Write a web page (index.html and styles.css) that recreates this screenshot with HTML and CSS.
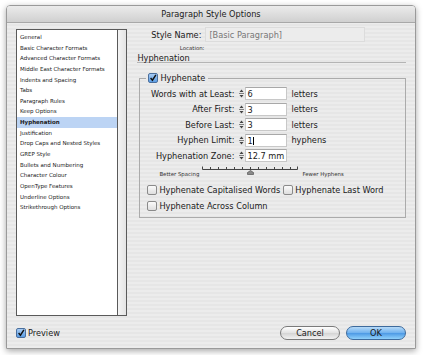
FILE: index.html
```html
<!DOCTYPE html>
<html>
<head>
<meta charset="utf-8">
<link rel="stylesheet" href="styles.css">
</head>
<body>
<div class="window">
  <div class="titlebar">Paragraph Style Options</div>
  <div class="body">
    <div class="main">
      <div class="sidebar">
        <ul class="list">
          <li>General</li>
          <li>Basic Character Formats</li>
          <li>Advanced Character Formats</li>
          <li>Middle East Character Formats</li>
          <li>Indents and Spacing</li>
          <li>Tabs</li>
          <li>Paragraph Rules</li>
          <li>Keep Options</li>
          <li class="sel">Hyphenation</li>
          <li>Justification</li>
          <li>Drop Caps and Nested Styles</li>
          <li>GREP Style</li>
          <li>Bullets and Numbering</li>
          <li>Character Colour</li>
          <li>OpenType Features</li>
          <li>Underline Options</li>
          <li>Strikethrough Options</li>
        </ul>
        <div class="scroll"></div>
      </div>
      <div class="panel">
        <div class="style-row">
          <span class="style-lbl">Style Name:</span>
          <span class="style-field">[Basic Paragraph]</span>
        </div>
        <div class="loc-row"><span class="loc-lbl">Location:</span></div>
        <div class="section-title">Hyphenation</div>
        <div class="group">
          <div class="legend">
            <span class="cb checked"><svg viewBox="0 0 10 10" width="10" height="10"><path d="M2 5 L4.3 7.8 L8.6 1.2" fill="none" stroke="#111" stroke-width="1.8"/></svg></span>
            <span>Hyphenate</span>
          </div>
          <div class="rows">
            <div class="row"><span class="rlbl">Words with at Least:</span><span class="spin"><svg viewBox="0 0 7 11" width="7" height="11"><path d="M3.5 1.5 L5.5 4 L1.5 4 Z M3.5 7 L5.5 7 L3.5 9.5 L1.5 7 Z" fill="#444"/><path d="M1 5.5 H6" stroke="#666" stroke-width="0.8"/></svg></span><span class="num">6</span><span class="unit">letters</span></div>
            <div class="row"><span class="rlbl">After First:</span><span class="spin"><svg viewBox="0 0 7 11" width="7" height="11"><path d="M3.5 1.5 L5.5 4 L1.5 4 Z M3.5 7 L5.5 7 L3.5 9.5 L1.5 7 Z" fill="#444"/><path d="M1 5.5 H6" stroke="#666" stroke-width="0.8"/></svg></span><span class="num">3</span><span class="unit">letters</span></div>
            <div class="row"><span class="rlbl">Before Last:</span><span class="spin"><svg viewBox="0 0 7 11" width="7" height="11"><path d="M3.5 1.5 L5.5 4 L1.5 4 Z M3.5 7 L5.5 7 L3.5 9.5 L1.5 7 Z" fill="#444"/><path d="M1 5.5 H6" stroke="#666" stroke-width="0.8"/></svg></span><span class="num">3</span><span class="unit">letters</span></div>
            <div class="row"><span class="rlbl">Hyphen Limit:</span><span class="spin"><svg viewBox="0 0 7 11" width="7" height="11"><path d="M3.5 1.5 L5.5 4 L1.5 4 Z M3.5 7 L5.5 7 L3.5 9.5 L1.5 7 Z" fill="#444"/><path d="M1 5.5 H6" stroke="#666" stroke-width="0.8"/></svg></span><span class="num">1<i class="caret"></i></span><span class="unit">hyphens</span></div>
            <div class="row"><span class="rlbl">Hyphenation Zone:</span><span class="spin"><svg viewBox="0 0 7 11" width="7" height="11"><path d="M3.5 1.5 L5.5 4 L1.5 4 Z M3.5 7 L5.5 7 L3.5 9.5 L1.5 7 Z" fill="#444"/><path d="M1 5.5 H6" stroke="#666" stroke-width="0.8"/></svg></span><span class="num">12.7 mm</span></div>
          </div>
          <div class="slider">
            <span class="slbl first">Better Spacing</span>
            <span class="track">
              <svg viewBox="0 0 96 10" width="96" height="10"><path d="M0.5 4.5 H95.5 M0.5 1.5 V4.5 M8.5 2 V4.5 M16.5 2 V4.5 M24.5 2 V4.5 M32.5 2 V4.5 M40.5 2 V4.5 M48.5 2 V4.5 M56.5 2 V4.5 M64.5 2 V4.5 M72.5 2 V4.5 M80.5 2 V4.5 M88.5 2 V4.5 M95.5 1.5 V4.5" stroke="#444" stroke-width="1" fill="none"/><path d="M45.5 9.5 L45.5 7.5 L48.5 5.5 L51.5 7.5 L51.5 9.5 Z" fill="#8a8a8a" stroke="#444" stroke-width="0.6"/></svg>
            </span>
            <span class="slbl">Fewer Hyphens</span>
          </div>
          <div class="checks">
            <div class="crow">
              <span class="copt"><span class="cb"></span><span>Hyphenate Capitalised Words</span></span>
              <span class="copt"><span class="cb"></span><span>Hyphenate Last Word</span></span>
            </div>
            <div class="crow">
              <span class="copt"><span class="cb"></span><span>Hyphenate Across Column</span></span>
            </div>
          </div>
        </div>
      </div>
    </div>
    <div class="footer">
      <span class="copt preview"><span class="cb checked"><svg viewBox="0 0 10 10" width="10" height="10"><path d="M2 5 L4.3 7.8 L8.6 1.2" fill="none" stroke="#111" stroke-width="1.8"/></svg></span><span>Preview</span></span>
      <div class="buttons">
        <span class="btn">Cancel</span>
        <span class="btn ok">OK</span>
      </div>
    </div>
  </div>
</div>
</body>
</html>
```

FILE: styles.css
```css
* { box-sizing: border-box; }
html, body { margin: 0; padding: 0; background: #fff; }
body {
  font-family: "DejaVu Sans", sans-serif;
  font-size: 8px;
  color: #1a1a1a;
  width: 424px;
  height: 355px;
  overflow: hidden;
}
.window {
  margin: 5px 0 0 6px;
  width: 410px;
  height: 344px;
  border: 1px solid #9a9a9a;
  border-radius: 4px 4px 0 0;
  box-shadow: 0 2px 6px rgba(0,0,0,0.35);
  background: repeating-linear-gradient(#ececec 0 2px, #e6e6e6 2px 4px);
  display: flex;
  flex-direction: column;
  overflow: hidden;
}
.titlebar {
  height: 17px;
  flex: none;
  background: linear-gradient(#ebebeb, #d0d0d0);
  border-bottom: 1px solid #a8a8a8;
  text-align: center;
  font-size: 8.2px;
  line-height: 16px;
  color: #222;
}
.body {
  flex: 1;
  display: flex;
  flex-direction: column;
  padding: 4px 8px 0 9px;
}
.main {
  display: flex;
  height: 289px;
}
.sidebar {
  margin-top: 2px;
  width: 112px;
  height: 287px;
  display: flex;
  border: 1px solid #5a5a5a;
  background: #fff;
}
.list {
  list-style: none;
  margin: 0;
  padding: 2px 0 0 0;
  width: 101px;
  border-right: 1px solid #5a5a5a;
  font-size: 5.5px;
}
.list li {
  height: 10.65px;
  line-height: 10.65px;
  padding-left: 3px;
  white-space: nowrap;
}
.list li.sel {
  background: #bcd4f4;
  font-weight: bold;
}
.scroll {
  flex: 1;
  background: linear-gradient(90deg, #f4f4f4, #e4e4e4);
}
.panel {
  margin-left: 10px;
  width: 271px;
  display: flex;
  flex-direction: column;
}
.style-row {
  display: flex;
  align-items: center;
  height: 15px;
}
.style-lbl {
  width: 64px;
  text-align: right;
  font-size: 8.2px;
}
.style-field {
  margin-left: 4px;
  width: 160px;
  height: 15px;
  line-height: 14px;
  padding-left: 3px;
  border: 1px solid #dcdcdc;
  background: #ececec;
  color: #777;
  font-size: 8.2px;
}
.loc-row {
  height: 12px;
  display: flex;
  align-items: center;
}
.loc-lbl {
  width: 67px;
  text-align: right;
  font-size: 5.4px;
  color: #333;
}
.section-title {
  font-size: 8.2px;
  height: 9px;
  line-height: 8px;
  border-bottom: 1px solid #b4b4b4;
  margin-right: 1px;
}
.group {
  margin: 15px 1px 0 2px;
  height: 140px;
  border: 1px solid #ababab;
  position: relative;
  padding: 7px 0 0 0;
}
.legend {
  position: absolute;
  top: -6px;
  left: 6px;
  display: flex;
  align-items: center;
  gap: 2px;
  padding: 0 3px 0 2px;
  background: #e9e9e9;
  font-size: 8.2px;
}
.cb {
  width: 10px;
  height: 10px;
  border: 1px solid #8a8a8a;
  border-radius: 2px;
  background: linear-gradient(#fafafa, #dedede);
  display: inline-flex;
  align-items: center;
  justify-content: center;
  flex: none;
}
.cb.checked {
  background: linear-gradient(#a8ccf4, #5b9de4);
  border-color: #4a6f9e;
}
.cb svg { display: block; margin-top: -1px; }
.rows {
  display: flex;
  flex-direction: column;
}
.row {
  display: flex;
  align-items: center;
  height: 15.5px;
}
.rlbl {
  width: 94px;
  text-align: right;
  font-size: 8.2px;
  white-space: nowrap;
}
.spin {
  margin-left: 4px;
  width: 7px;
  height: 11px;
  display: flex;
}
.num {
  width: 42px;
  height: 13px;
  line-height: 12px;
  background: #fff;
  border: 1px solid #c8c8c8;
  border-top-color: #a8a8a8;
  padding-left: 1px;
  font-size: 8.2px;
  white-space: nowrap;
  overflow: hidden;
}
.caret {
  display: inline-block;
  width: 1px;
  height: 8px;
  background: #000;
  vertical-align: -1px;
}
.unit {
  margin-left: 4px;
  font-size: 8.2px;
}
.slider {
  display: flex;
  align-items: flex-start;
  height: 14px;
}
.slbl {
  font-size: 5.4px;
  color: #333;
  line-height: 7px;
  margin-top: 7px;
}
.slbl.first { margin-left: 19px; width: 43px; }
.track {
  margin: 1px 4px 0 0;
  height: 10px;
  display: flex;
}
.checks {
  margin-top: 6px;
  display: flex;
  flex-direction: column;
  gap: 4px;
}
.crow {
  display: flex;
  height: 12px;
  align-items: center;
  padding-left: 7px;
  gap: 3px;
}
.copt {
  display: inline-flex;
  align-items: center;
  gap: 2px;
  font-size: 8.2px;
  white-space: nowrap;
}
.footer {
  display: flex;
  align-items: center;
  justify-content: space-between;
  height: 32px;
  padding-top: 2px;
}
.buttons {
  display: flex;
  gap: 6px;
  margin-right: 1px;
}
.btn {
  width: 60px;
  height: 14px;
  border-radius: 7px;
  border: 1px solid #7a7a7a;
  background: linear-gradient(#ffffff, #e2e2e2 50%, #d4d4d4 51%, #f2f2f2);
  text-align: center;
  line-height: 12px;
  font-size: 8.2px;
}
.btn.ok {
  border-color: #3d6a9c;
  background: linear-gradient(#b6daf8, #6eb0ee 50%, #4c98e4 51%, #8fd0fb);
}
```
